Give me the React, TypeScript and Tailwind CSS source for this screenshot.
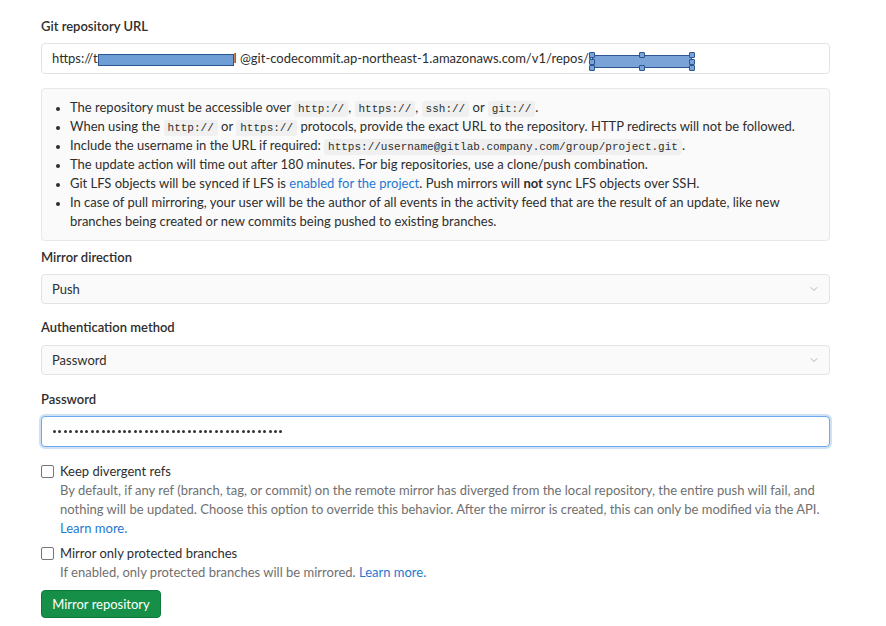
import { ChevronDown } from 'lucide-react';

const font = { fontFamily: '"Segoe UI", Lato, "Liberation Sans", sans-serif' };

function Code({ children }: { children: React.ReactNode }) {
  return (
    <code className="rounded-[3px] bg-[#f0f0f0] px-[4px] py-[2px] font-['Liberation_Mono',monospace] text-[11px] leading-none text-[#2e2e2e]">
      {children}
    </code>
  );
}

function Label({ children, className = '' }: { children: React.ReactNode; className?: string }) {
  return <div className={`text-[13px] font-semibold leading-[19px] text-[#2e2e2e] ${className}`}>{children}</div>;
}

function SelectBox({ value, className = '' }: { value: string; className?: string }) {
  return (
    <div
      className={`flex h-[30px] items-center justify-between rounded-[4px] border border-[#e3e3e3] bg-[#fafafa] pl-[10px] pr-[9px] text-[13px] text-[#2e2e2e] ${className}`}
    >
      <span>{value}</span>
      <ChevronDown className="h-[12px] w-[12px] text-[#b5b5b5]" strokeWidth={2} aria-hidden />
    </div>
  );
}

function Checkbox() {
  return <span className="mt-[3px] block h-[13px] w-[13px] shrink-0 rounded-[2px] border border-[#767676] bg-white" />;
}

function Handle({ className }: { className: string }) {
  return (
    <span
      className={`absolute h-[6px] w-[6px] rounded-[1px] border border-[#2c5592] bg-[#7aa3d8] ${className}`}
    />
  );
}

const dots = Array.from({ length: 43 }, (_, i) => i);

export default function App() {
  return (
    <div className="min-h-[626px] bg-white pl-[41px] pt-[17px]" style={font}>
      <div className="w-[789px] text-[13px] leading-[19px] text-[#2e2e2e]">
        <Label>Git repository URL</Label>
        <div className="relative mt-[7px] flex h-[31px] items-center rounded-[4px] border border-[#e3e3e3] bg-white pl-[10px]">
          <span className="text-[#2e2e2e]">
            https://t<span className="inline-block w-[136px]" />l @git-codecommit.ap-northeast-1.amazonaws.com/v1/repos/s
          </span>
          <span className="absolute left-[56px] top-[10px] h-[12px] w-[136px] border border-[#2c5592] bg-[#6f9dd5]" />
          <span className="absolute left-[550px] top-[11px] h-[13px] w-[100px] border border-[#2c5592] bg-[#7aa3d8]" />
          <Handle className="left-[547px] top-[8px]" />
          <Handle className="left-[547px] top-[15px]" />
          <Handle className="left-[547px] top-[21px]" />
          <Handle className="left-[597px] top-[8px]" />
          <Handle className="left-[597px] top-[21px]" />
          <Handle className="left-[647px] top-[8px]" />
          <Handle className="left-[647px] top-[15px]" />
          <Handle className="left-[647px] top-[21px]" />
        </div>

        <div className="mt-[14px] rounded-[4px] border border-[#e8e8e8] bg-[#fafafa] py-[9px] pl-[28px] pr-[10px]">
          <ul className="list-disc leading-[19px] marker:text-[11px]">
            <li>
              The repository must be accessible over <Code>http://</Code>, <Code>https://</Code>, <Code>ssh://</Code> or{' '}
              <Code>git://</Code>.
            </li>
            <li>
              When using the <Code>http://</Code> or <Code>https://</Code> protocols, provide the exact URL to the
              repository. HTTP redirects will not be followed.
            </li>
            <li>
              Include the username in the URL if required: <Code>https://username@gitlab.company.com/group/project.git</Code>.
            </li>
            <li>The update action will time out after 180 minutes. For big repositories, use a clone/push combination.</li>
            <li>
              Git LFS objects will be synced if LFS is <a className="text-[#1f78d1]">enabled for the project</a>. Push
              mirrors will <b>not</b> sync LFS objects over SSH.
            </li>
            <li>
              In case of pull mirroring, your user will be the author of all events in the activity feed that are the
              result of an update, like new branches being created or new commits being pushed to existing branches.
            </li>
          </ul>
        </div>

        <Label className="mt-[7px]">Mirror direction</Label>
        <SelectBox value="Push" className="mt-[7px]" />

        <Label className="mt-[14px]">Authentication method</Label>
        <SelectBox value="Password" className="mt-[8px]" />

        <Label className="mt-[15px]">Password</Label>
        <div className="mt-[7px] flex h-[31px] items-center gap-[2.4px] rounded-[4px] border border-[#6eaaf0] bg-white pl-[11px] shadow-[0_0_0_2px_rgba(31,120,209,0.22)]">
          {dots.map((d) => (
            <span key={d} className="block h-[3px] w-[3px] rounded-full bg-[#333]" />
          ))}
        </div>

        <div className="mt-[15px] flex gap-[6px]">
          <Checkbox />
          <div>
            <div>Keep divergent refs</div>
            <div className="text-[#707070]">
              By default, if any ref (branch, tag, or commit) on the remote mirror has diverged from the local repository,
              the entire push will fail, and nothing will be updated. Choose this option to override this behavior. After
              the mirror is created, this can only be modified via the API. <a className="text-[#1f78d1]">Learn more.</a>
            </div>
          </div>
        </div>

        <div className="mt-[6px] flex gap-[6px]">
          <Checkbox />
          <div>
            <div>Mirror only protected branches</div>
            <div className="text-[#707070]">
              If enabled, only protected branches will be mirrored. <a className="text-[#1f78d1]">Learn more.</a>
            </div>
          </div>
        </div>

        <button
          type="button"
          className="mt-[8px] h-[28px] w-[120px] rounded-[4px] border border-[#0f7a3c] bg-[#168f48] text-[13px] text-white"
        >
          Mirror repository
        </button>
      </div>
    </div>
  );
}
